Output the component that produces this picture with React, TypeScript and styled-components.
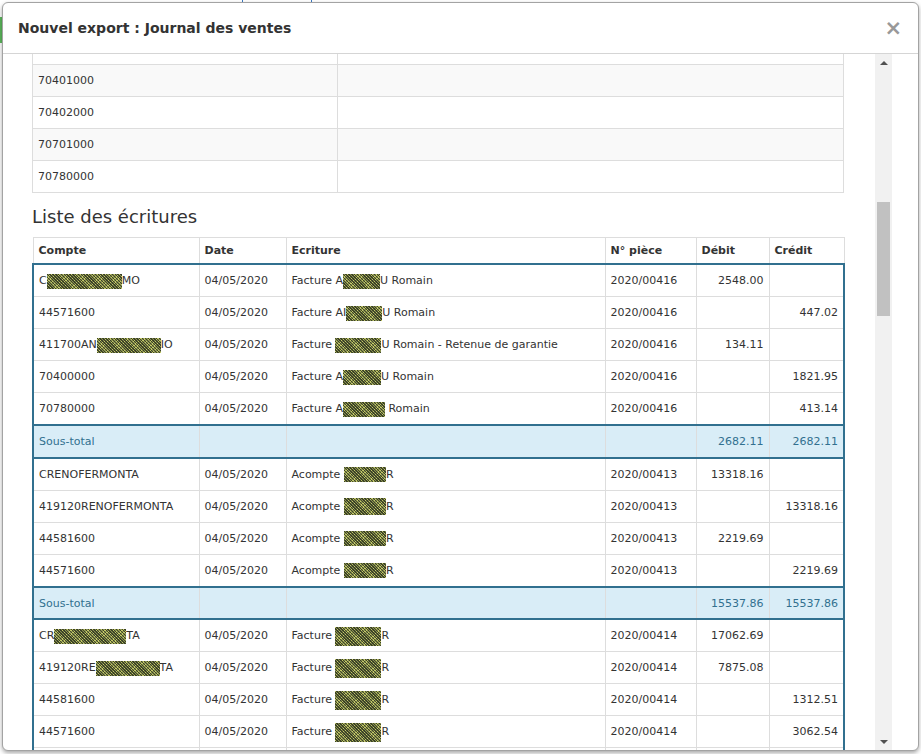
import React from 'react';
import styled, { createGlobalStyle } from 'styled-components';

type Cell = React.ReactNode;

const Redact = ({ w, h = 15 }: { w: number; h?: number }) => (
    <Blot $h={h} style={{ width: w }} />
);

const accounts = ['', '70401000', '70402000', '70701000', '70780000'];

const groups: { piece: string; rows: Cell[][]; total: string }[] = [
    {
        piece: '2020/00416',
        total: '2682.11',
        rows: [
            [<>C<Redact w={75} />MO</>, <>Facture A<Redact w={37} />U Romain</>, '2548.00', ''],
            ['44571600', <>Facture AI<Redact w={36} />U Romain</>, '', '447.02'],
            [<>411700AN<Redact w={64} />IO</>, <>Facture <Redact w={46} />U Romain - Retenue de garantie</>, '134.11', ''],
            ['70400000', <>Facture A<Redact w={38} />U Romain</>, '', '1821.95'],
            ['70780000', <>Facture A<Redact w={42} /> Romain</>, '', '413.14'],
        ],
    },
    {
        piece: '2020/00413',
        total: '15537.86',
        rows: [
            ['CRENOFERMONTA', <>Acompte <Redact w={42} />R</>, '13318.16', ''],
            ['419120RENOFERMONTA', <>Acompte <Redact w={42} h={17} />R</>, '', '13318.16'],
            ['44581600', <>Acompte <Redact w={42} />R</>, '2219.69', ''],
            ['44571600', <>Acompte <Redact w={42} />R</>, '', '2219.69'],
        ],
    },
    {
        piece: '2020/00414',
        total: '',
        rows: [
            [<>CR<Redact w={72} />TA</>, <>Facture <Redact w={46} h={19} />R</>, '17062.69', ''],
            [<>419120RE<Redact w={64} />TA</>, <>Facture <Redact w={46} h={19} />R</>, '7875.08', ''],
            ['44581600', <>Facture <Redact w={46} h={19} />R</>, '', '1312.51'],
            ['44571600', <>Facture <Redact w={46} h={19} />R</>, '', '3062.54'],
            ['70400000', <>Facture <Redact w={46} h={19} />R</>, '', '8687.64'],
        ],
    },
];

const App = () => {
    return (
        <Page>
            <GlobalStyle />
            <GreenMark />
            <BlueTick $left={242} />
            <BlueTick $left={311} />
            <Modal>
                <Header>
                    <Title>Nouvel export : Journal des ventes</Title>
                    <Close>×</Close>
                </Header>
                <Body>
                    <Viewport>
                        <Content>
                            <AccountTable>
                                <colgroup>
                                    <col style={{ width: 305 }} />
                                    <col />
                                </colgroup>
                                <tbody>
                                    {accounts.map((a, i) => (
                                        <tr key={i}>
                                            <Td>{a}</Td>
                                            <Td></Td>
                                        </tr>
                                    ))}
                                </tbody>
                            </AccountTable>
                            <SectionTitle>Liste des écritures</SectionTitle>
                            <EntryTable>
                                <colgroup>
                                    <col style={{ width: 166 }} />
                                    <col style={{ width: 87 }} />
                                    <col style={{ width: 319 }} />
                                    <col style={{ width: 91 }} />
                                    <col style={{ width: 73 }} />
                                    <col />
                                </colgroup>
                                <thead>
                                    <tr>
                                        <Th>Compte</Th>
                                        <Th>Date</Th>
                                        <Th>Ecriture</Th>
                                        <Th>N° pièce</Th>
                                        <Th>Débit</Th>
                                        <Th>Crédit</Th>
                                    </tr>
                                </thead>
                                <GroupBody>
                                    {groups.map((g, gi) => (
                                        <React.Fragment key={gi}>
                                            {g.rows.map((r, ri) => (
                                                <tr key={ri}>
                                                    <Td>{r[0]}</Td>
                                                    <Td>04/05/2020</Td>
                                                    <Td>{r[1]}</Td>
                                                    <Td>{g.piece}</Td>
                                                    <Td $num>{r[2]}</Td>
                                                    <Td $num>{r[3]}</Td>
                                                </tr>
                                            ))}
                                            {g.total && (
                                                <SubtotalRow>
                                                    <Td>Sous-total</Td>
                                                    <Td></Td>
                                                    <Td></Td>
                                                    <Td></Td>
                                                    <Td $num>{g.total}</Td>
                                                    <Td $num>{g.total}</Td>
                                                </SubtotalRow>
                                            )}
                                        </React.Fragment>
                                    ))}
                                </GroupBody>
                            </EntryTable>
                        </Content>
                    </Viewport>
                    <Scrollbar>
                        <ArrowUp />
                        <Thumb />
                        <Track />
                        <ArrowDown />
                    </Scrollbar>
                </Body>
            </Modal>
        </Page>
    );
};

export default App;

const GlobalStyle = createGlobalStyle`
    html, body {
        margin: 0;
        padding: 0;
        background: #fff;
    }
    body {
        font-family: "DejaVu Sans", Verdana, sans-serif;
    }
`;

const Page = styled.div`
    position: relative;
    width: 921px;
    height: 754px;
    box-sizing: border-box;
    padding: 2px 2px 3px 2px;
    display: flex;
    background: #fff;
    overflow: hidden;
`;

const GreenMark = styled.div`
    position: absolute;
    left: 0;
    top: 17px;
    width: 2px;
    height: 26px;
    background: #5cb85c;
`;

const BlueTick = styled.div<{ $left: number }>`
    position: absolute;
    top: 0;
    left: ${p => p.$left}px;
    width: 1px;
    height: 2px;
    background: #3a78c0;
`;

const Modal = styled.div`
    position: relative;
    flex: 1;
    display: flex;
    flex-direction: column;
    min-height: 0;
    background: #fff;
    border: 1px solid #a3a3a3;
    border-radius: 6px;
    box-shadow: 0 2px 4px rgba(0, 0, 0, 0.35);
    overflow: hidden;
`;

const Header = styled.div`
    display: flex;
    align-items: center;
    justify-content: space-between;
    padding: 15px 16px 15px 15px;
    border-bottom: 1px solid #d5d5d5;
`;

const Title = styled.h4`
    margin: 0;
    font-size: 14px;
    font-weight: bold;
    line-height: 20px;
    color: #333;
`;

const Close = styled.button`
    background: none;
    border: 0;
    padding: 0;
    font-family: "DejaVu Sans", sans-serif;
    font-size: 21px;
    font-weight: bold;
    line-height: 20px;
    color: #999;
    cursor: pointer;
`;

const Body = styled.div`
    flex: 1;
    min-height: 0;
    display: flex;
    padding-right: 26px;
`;

const Viewport = styled.div`
    flex: 1;
    min-width: 0;
    overflow: hidden;
    padding: 0 30px 0 29px;
`;

const Content = styled.div`
    margin-top: -22px;
`;

const Scrollbar = styled.div`
    width: 17px;
    display: flex;
    flex-direction: column;
    align-items: center;
    background: #f1f1f1;
`;

const ArrowUp = styled.div`
    margin-top: 7px;
    width: 0;
    height: 0;
    border-left: 4px solid transparent;
    border-right: 4px solid transparent;
    border-bottom: 4px solid #505050;
`;

const ArrowDown = styled.div`
    margin-bottom: 6px;
    width: 0;
    height: 0;
    border-left: 4px solid transparent;
    border-right: 4px solid transparent;
    border-top: 4px solid #505050;
`;

const Thumb = styled.div`
    margin-top: 137px;
    width: 13px;
    height: 114px;
    background: #c1c1c1;
`;

const Track = styled.div`
    flex: 1;
`;

const Table = styled.table`
    width: 100%;
    border-collapse: collapse;
    table-layout: fixed;
    font-size: 11px;
    color: #333;
`;

const AccountTable = styled(Table)`
    width: calc(100% - 1px);
    tbody tr:nth-child(even) td {
        background: #f9f9f9;
    }
`;

const EntryTable = styled(Table)``;

const Td = styled.td<{ $num?: boolean }>`
    padding: 8px 5px;
    line-height: 15px;
    height: 15px;
    border: 1px solid #ddd;
    white-space: nowrap;
    overflow: hidden;
    text-align: ${p => (p.$num ? 'right' : 'left')};
`;

const Th = styled.th`
    padding: 5px;
    line-height: 15px;
    text-align: left;
    font-weight: bold;
    border: 1px solid #ddd;
    border-bottom: 2px solid #31708f;
`;

const GroupBody = styled.tbody`
    border-left: 2px solid #31708f;
    border-right: 2px solid #31708f;
`;

const SubtotalRow = styled.tr`
    td {
        padding-bottom: 7.5px;
        background: #d9edf7;
        color: #31708f;
        border-top: 2px solid #31708f;
        border-bottom: 2px solid #31708f;
    }
`;

const SectionTitle = styled.h4`
    margin: 14px 0 10px;
    font-size: 18px;
    font-weight: normal;
    line-height: 20px;
    color: #333;
`;

const Blot = styled.span<{ $h: number }>`
    display: inline-block;
    vertical-align: middle;
    height: ${p => p.$h}px;
    margin: ${p => -(p.$h - 10) / 2}px 0;
    background:
        repeating-linear-gradient(45deg, rgba(38, 44, 28, 0.8) 0 1px, transparent 1px 2px),
        repeating-linear-gradient(-45deg, rgba(215, 220, 110, 0.75) 0 1px, transparent 1px 3px),
        #8a9250;
`;
